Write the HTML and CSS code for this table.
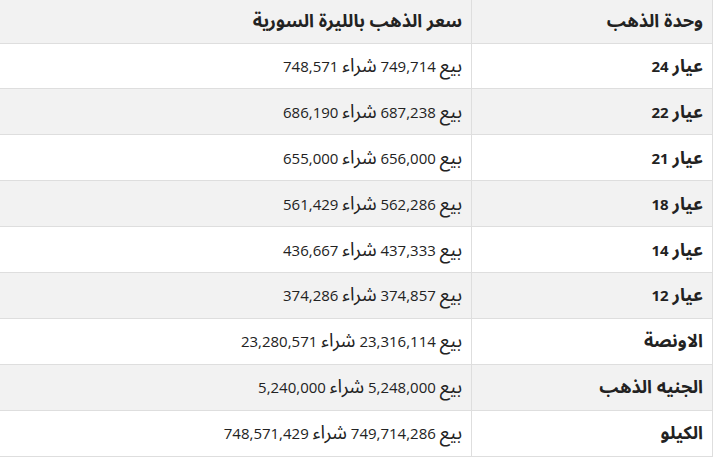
FILE: index.html
```html
<!DOCTYPE html>
<html lang="ar" dir="rtl">
<head>
<meta charset="utf-8">
<link rel="stylesheet" href="styles.css">
</head>
<body>
<table class="gold">
<thead>
<tr><th class="c1"><span class="ar">وحدة الذهب</span></th><th class="c2"><span class="ar">سعر الذهب بالليرة السورية</span></th></tr>
</thead>
<tbody>
<tr><td class="c1"><span class="ar">عيار</span> 24</td><td class="c2"><span class="ar">بيع</span> 749,714 <span class="ar">شراء</span> 748,571</td></tr>
<tr class="alt"><td class="c1"><span class="ar">عيار</span> 22</td><td class="c2"><span class="ar">بيع</span> 687,238 <span class="ar">شراء</span> 686,190</td></tr>
<tr><td class="c1"><span class="ar">عيار</span> 21</td><td class="c2"><span class="ar">بيع</span> 656,000 <span class="ar">شراء</span> 655,000</td></tr>
<tr class="alt"><td class="c1"><span class="ar">عيار</span> 18</td><td class="c2"><span class="ar">بيع</span> 562,286 <span class="ar">شراء</span> 561,429</td></tr>
<tr><td class="c1"><span class="ar">عيار</span> 14</td><td class="c2"><span class="ar">بيع</span> 437,333 <span class="ar">شراء</span> 436,667</td></tr>
<tr class="alt"><td class="c1"><span class="ar">عيار</span> 12</td><td class="c2"><span class="ar">بيع</span> 374,857 <span class="ar">شراء</span> 374,286</td></tr>
<tr><td class="c1"><span class="ar">الاونصة</span></td><td class="c2"><span class="ar">بيع</span> 23,316,114 <span class="ar">شراء</span> 23,280,571</td></tr>
<tr class="alt"><td class="c1"><span class="ar">الجنيه الذهب</span></td><td class="c2"><span class="ar">بيع</span> 5,248,000 <span class="ar">شراء</span> 5,240,000</td></tr>
<tr><td class="c1"><span class="ar">الكيلو</span></td><td class="c2"><span class="ar">بيع</span> 749,714,286 <span class="ar">شراء</span> 748,571,429</td></tr>
</tbody>
</table>
</body>
</html>
```
FILE: styles.css
```css
html, body {
  margin: 0;
  padding: 0;
  background: #fff;
}
body {
  font-family: "Open Sans", "Noto Sans Arabic", sans-serif;
  font-size: 15px;
  color: #222;
}
.ar {
  font-family: "Noto Sans Arabic", sans-serif;
  font-size: 19px;
  line-height: 1;
}
.gold {
  border-collapse: collapse;
  width: 714px;
  margin-left: 0;
  margin-right: 15px;
}
.gold th, .gold td {
  border: 1px solid #dedede;
  text-align: right;
  padding: 0 9px;
  height: 45.9px;
  box-sizing: border-box;
  line-height: 20px;
}
.gold th {
  background: #f2f2f2;
  font-weight: 700;
  height: 43px;
  font-size: 15px;
}
.gold th .ar {
  font-size: 18px;
}
.gold .c1 {
  width: 241px;
}
.gold td.c1 {
  font-weight: 700;
  font-size: 15px;
}
.gold td.c1 .ar {
  font-size: 18px;
}
.gold tr.alt td {
  background: #f2f2f2;
}
.gold thead tr th {
  border-top: none;
}
```
